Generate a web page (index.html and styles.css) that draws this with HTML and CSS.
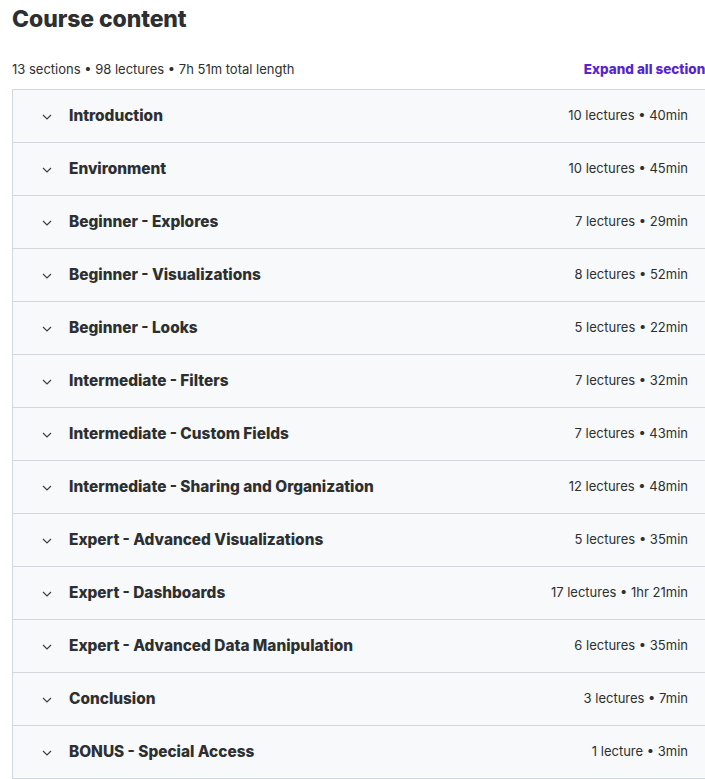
FILE: index.html
```html
<!DOCTYPE html>
<html>
<head>
<meta charset="utf-8">
<link rel="stylesheet" href="styles.css">
</head>
<body>
<div class="page">
  <h2 class="title">Course content</h2>
  <div class="meta">
    <span class="stats">13 sections • 98 lectures • 7h 51m total length</span>
    <span class="expand">Expand all sections</span>
  </div>
  <div class="accordion">
    <div class="row"><svg class="chev" viewBox="0 0 10 6"><path d="M1 1l4 4 4-4"/></svg><span class="name">Introduction</span><span class="info">10 lectures • 40min</span></div>
    <div class="row"><svg class="chev" viewBox="0 0 10 6"><path d="M1 1l4 4 4-4"/></svg><span class="name">Environment</span><span class="info">10 lectures • 45min</span></div>
    <div class="row"><svg class="chev" viewBox="0 0 10 6"><path d="M1 1l4 4 4-4"/></svg><span class="name">Beginner - Explores</span><span class="info">7 lectures • 29min</span></div>
    <div class="row"><svg class="chev" viewBox="0 0 10 6"><path d="M1 1l4 4 4-4"/></svg><span class="name">Beginner - Visualizations</span><span class="info">8 lectures • 52min</span></div>
    <div class="row"><svg class="chev" viewBox="0 0 10 6"><path d="M1 1l4 4 4-4"/></svg><span class="name">Beginner - Looks</span><span class="info">5 lectures • 22min</span></div>
    <div class="row"><svg class="chev" viewBox="0 0 10 6"><path d="M1 1l4 4 4-4"/></svg><span class="name">Intermediate - Filters</span><span class="info">7 lectures • 32min</span></div>
    <div class="row"><svg class="chev" viewBox="0 0 10 6"><path d="M1 1l4 4 4-4"/></svg><span class="name">Intermediate - Custom Fields</span><span class="info">7 lectures • 43min</span></div>
    <div class="row"><svg class="chev" viewBox="0 0 10 6"><path d="M1 1l4 4 4-4"/></svg><span class="name">Intermediate - Sharing and Organization</span><span class="info">12 lectures • 48min</span></div>
    <div class="row"><svg class="chev" viewBox="0 0 10 6"><path d="M1 1l4 4 4-4"/></svg><span class="name">Expert - Advanced Visualizations</span><span class="info">5 lectures • 35min</span></div>
    <div class="row"><svg class="chev" viewBox="0 0 10 6"><path d="M1 1l4 4 4-4"/></svg><span class="name">Expert - Dashboards</span><span class="info">17 lectures • 1hr 21min</span></div>
    <div class="row"><svg class="chev" viewBox="0 0 10 6"><path d="M1 1l4 4 4-4"/></svg><span class="name">Expert - Advanced Data Manipulation</span><span class="info">6 lectures • 35min</span></div>
    <div class="row"><svg class="chev" viewBox="0 0 10 6"><path d="M1 1l4 4 4-4"/></svg><span class="name">Conclusion</span><span class="info">3 lectures • 7min</span></div>
    <div class="row"><svg class="chev" viewBox="0 0 10 6"><path d="M1 1l4 4 4-4"/></svg><span class="name">BONUS - Special Access</span><span class="info">1 lecture • 3min</span></div>
  </div>
</div>
</body>
</html>
```
FILE: styles.css
```css
html, body {
  margin: 0;
  padding: 0;
  overflow: hidden;
  background: #fff;
}
body {
  font-family: Inter, "Noto Sans", "Liberation Sans", sans-serif;
  color: #2d2f31;
}
.page {
  width: 701px;
  padding-left: 12px;
}
.title {
  margin: 0;
  padding-top: 4px;
  font-size: 23px;
  line-height: 30px;
  font-weight: 800;
  letter-spacing: -0.1px;
  color: #2d2f31;
}
.meta {
  display: flex;
  justify-content: space-between;
  align-items: center;
  margin-top: 24px;
  height: 22px;
  margin-bottom: 9px;
}
.stats {
  font-size: 13px;
  color: #2d2f31;
}
.expand {
  font-size: 13.5px;
  font-weight: 800;
  color: #5624d0;
  white-space: nowrap;
}
.accordion {
  border: 1px solid #d1d7dc;
  border-bottom: none;
}
.row {
  display: flex;
  align-items: center;
  height: 52px;
  background: #f7f9fa;
  border-bottom: 1px solid #d1d7dc;
  padding: 0 24px 0 29px;
}
.chev {
  width: 10px;
  height: 6px;
  fill: none;
  stroke: #3e4143;
  stroke-width: 1.2;
  margin-right: 17px;
  margin-top: 1px;
}
.name {
  flex: 1;
  font-size: 15.4px;
  font-weight: 800;
  color: #2d2f31;
  margin-top: -2px;
}
.info {
  font-size: 13px;
  color: #2d2f31;
  white-space: nowrap;
  margin-top: -2px;
}
```
